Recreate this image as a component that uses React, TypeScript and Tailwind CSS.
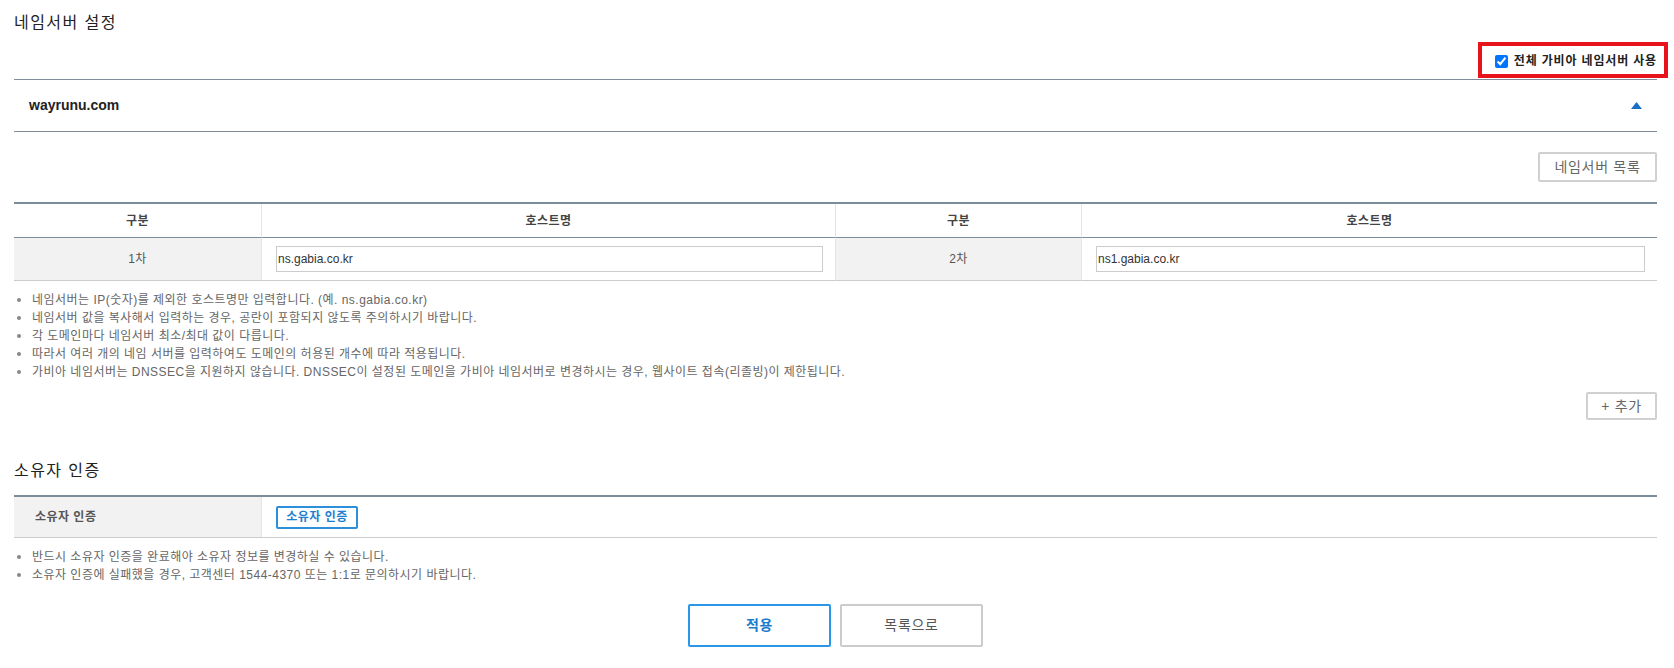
import React from "react";

const font = "font-['Liberation_Sans','Noto_Sans_CJK_KR',sans-serif]";

const notes1 = [
  "네임서버는 IP(숫자)를 제외한 호스트명만 입력합니다. (예. ns.gabia.co.kr)",
  "네임서버 값을 복사해서 입력하는 경우, 공란이 포함되지 않도록 주의하시기 바랍니다.",
  "각 도메인마다 네임서버 최소/최대 값이 다릅니다.",
  "따라서 여러 개의 네임 서버를 입력하여도 도메인의 허용된 개수에 따라 적용됩니다.",
  "가비아 네임서버는 DNSSEC을 지원하지 않습니다. DNSSEC이 설정된 도메인을 가비아 네임서버로 변경하시는 경우, 웹사이트 접속(리졸빙)이 제한됩니다.",
];

const notes2 = [
  "반드시 소유자 인증을 완료해야 소유자 정보를 변경하실 수 있습니다.",
  "소유자 인증에 실패했을 경우, 고객센터 1544-4370 또는 1:1로 문의하시기 바랍니다.",
];

const NoteList = ({ items }: { items: string[] }) => (
  <ul className="mt-[10px] text-[12px] leading-[18px] text-[#666]">
    {items.map((item) => (
      <li key={item} className="flex items-center">
        <span className="w-[18px] flex items-center">
          <span className="ml-[3px] w-[4px] h-[4px] rounded-full bg-[#888]" />
        </span>
        <span>{item}</span>
      </li>
    ))}
  </ul>
);

export default function App() {
  return (
    <div className={`${font} tracking-[0.03em] bg-white min-h-[668px] pl-[14px] pr-[17px] text-[#333]`}>
      {/* 네임서버 설정 */}
      <h2 className="pt-[11px] text-[16px] leading-6 tracking-[0.09em] text-[#222]">네임서버 설정</h2>

      <div className="mt-[17px] mb-[9px] flex justify-end">
        <label className="relative flex items-center h-[18px] gap-[6px] text-[12px] font-bold tracking-[0.07em] text-[#222]">
          <input type="checkbox" defaultChecked className="m-0 w-[13px] h-[13px]" />
          전체 가비아 네임서버 사용
          <span className="pointer-events-none absolute -left-[17px] -right-[11px] -top-[10px] -bottom-[8px] border-4 border-[#e8141c]" />
        </label>
      </div>

      <div className="border-t border-b border-[#7f8c99] h-[53px] flex items-center justify-between pl-[15px] pr-[15px]">
        <span className="text-[14px] font-bold text-[#222] tracking-normal">wayrunu.com</span>
        <svg width="11" height="7" viewBox="0 0 11 7">
          <polygon points="5.5,0 11,7 0,7" fill="#1a6fc4" />
        </svg>
      </div>

      <div className="mt-[20px] flex justify-end">
        <button className="w-[119px] h-[30px] border-2 border-[#d0d0d0] rounded-[2px] text-[14px] tracking-[0.05em] text-[#666] bg-white">
          네임서버 목록
        </button>
      </div>

      <div className="mt-[20px] border-t-2 border-[#7b8d9b] grid grid-cols-[247px_574px_246px_1fr] text-[12px]">
        <div className="h-[34px] flex items-center justify-center border-b border-[#7b8d9b] font-bold text-[#444]">구분</div>
        <div className="h-[34px] flex items-center justify-center border-b border-l border-b-[#7b8d9b] border-l-[#e5e5e5] font-bold text-[#444]">호스트명</div>
        <div className="h-[34px] flex items-center justify-center border-b border-l border-b-[#7b8d9b] border-l-[#e5e5e5] font-bold text-[#444]">구분</div>
        <div className="h-[34px] flex items-center justify-center border-b border-l border-b-[#7b8d9b] border-l-[#e5e5e5] font-bold text-[#444]">호스트명</div>

        <div className="h-[43px] flex items-center justify-center bg-[#f2f2f2] border-b border-[#ccc] text-[#555]">1차</div>
        <div className="h-[43px] flex items-center pl-[14px] pr-[12px] border-b border-l border-b-[#ccc] border-l-[#e5e5e5]">
          <input defaultValue="ns.gabia.co.kr" className="w-full h-[26px] border border-[#ccc] px-[1px] text-[12px] tracking-normal text-[#333] outline-none" />
        </div>
        <div className="h-[43px] flex items-center justify-center bg-[#f2f2f2] border-b border-l border-b-[#ccc] border-l-[#e5e5e5] text-[#555]">2차</div>
        <div className="h-[43px] flex items-center pl-[14px] pr-[12px] border-b border-l border-b-[#ccc] border-l-[#e5e5e5]">
          <input defaultValue="ns1.gabia.co.kr" className="w-full h-[26px] border border-[#ccc] px-[1px] text-[12px] tracking-normal text-[#333] outline-none" />
        </div>
      </div>

      <NoteList items={notes1} />

      <div className="mt-[11px] flex justify-end">
        <button className="w-[71px] h-[28px] border-2 border-[#d0d0d0] rounded-[2px] text-[14px] tracking-[0.05em] text-[#666] bg-white">
          + 추가
        </button>
      </div>

      {/* 소유자 인증 */}
      <h2 className="mt-[39px] text-[16px] leading-6 tracking-[0.09em] text-[#222]">소유자 인증</h2>

      <div className="mt-[12px] border-t-2 border-b border-t-[#7b8d9b] border-b-[#ccc] flex h-[43px]">
        <div className="w-[247px] bg-[#f2f2f2] flex items-center pl-[21px] text-[12px] font-bold text-[#555]">소유자 인증</div>
        <div className="flex-1 border-l border-[#e5e5e5] flex items-center pl-[14px]">
          <button className="w-[82px] h-[23px] border-2 border-[#2b90d9] rounded-[2px] text-[12px] font-bold text-[#1e7fcf] bg-white">
            소유자 인증
          </button>
        </div>
      </div>

      <NoteList items={notes2} />

      <div className="mt-[20px] flex justify-center gap-[9px]">
        <button className="w-[143px] h-[43px] border-2 border-[#2a97e6] rounded-[2px] text-[14px] font-bold tracking-[0.05em] text-[#1a7ccf] bg-white">
          적용
        </button>
        <button className="w-[143px] h-[43px] border-2 border-[#cccccc] rounded-[2px] text-[14px] tracking-[0.05em] text-[#555] bg-white">
          목록으로
        </button>
      </div>
    </div>
  );
}
